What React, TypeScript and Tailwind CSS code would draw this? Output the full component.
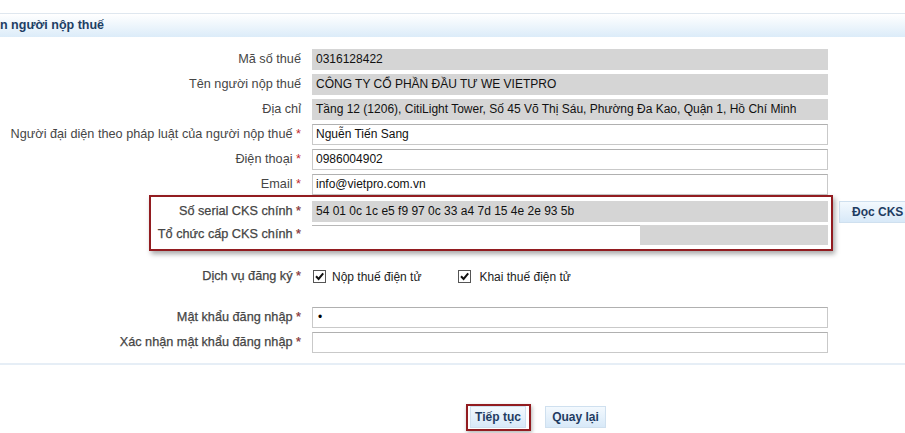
import React from "react";

const Star = () => <span className="text-[#c0282d]"> *</span>;

const Label = ({ text, req, strong }: { text: string; req?: boolean; strong?: boolean }) => (
  <div
    className={
      strong
        ? "w-[302px] shrink-0 whitespace-nowrap pr-[1px] text-right text-[12.7px] text-[#454545] [-webkit-text-stroke:0.25px_#454545]"
        : "w-[302px] shrink-0 whitespace-nowrap pr-[1px] text-right text-[12.7px] text-[#464646]"
    }
  >
    {text}
    {req && <Star />}
  </div>
);

const Field = ({ value, readOnly }: { value?: string; readOnly?: boolean }) => (
  <div
    className={
      readOnly
        ? "ml-[10px] h-[21px] w-[516px] shrink-0 whitespace-nowrap bg-[#d5d5d5] pl-[4px] leading-[21px] text-[#111]"
        : "ml-[10px] h-[21px] w-[516px] shrink-0 whitespace-nowrap border border-[#c9c9c9] border-t-[#b0b0b0] bg-white pl-[3px] leading-[19px] text-[#111]"
    }
  >
    {value}
  </div>
);

const Row = ({
  label,
  req,
  strong,
  value,
  readOnly,
}: {
  label: string;
  req?: boolean;
  strong?: boolean;
  value?: string;
  readOnly?: boolean;
}) => (
  <div className="flex h-[21px] items-center">
    <Label text={label} req={req} strong={strong} />
    <Field value={value} readOnly={readOnly} />
  </div>
);

const Check = () => (
  <span className="flex h-[13px] w-[13px] shrink-0 items-center justify-center border border-[#555] bg-white">
    <svg width="11" height="11" viewBox="0 0 11 11">
      <path d="M2 5.3 L4.6 8 L9.2 2.4" fill="none" stroke="#111" strokeWidth="2" />
    </svg>
  </span>
);

const Btn = ({ children, className }: { children: React.ReactNode; className?: string }) => (
  <button
    className={
      "h-[22px] shrink-0 border border-[#cfe0ef] bg-gradient-to-b from-[#f3f9fe] to-[#d8e9f8] text-[12px] font-bold text-[#1f3c62] " +
      (className ?? "")
    }
  >
    {children}
  </button>
);

export default function App() {
  return (
    <div
      className="relative h-[433px] w-[905px] overflow-hidden bg-white text-[12px]"
      style={{ fontFamily: '"Liberation Sans", Arial, sans-serif' }}
    >
      {/* header */}
      <div className="mt-[13px] h-[24px] border-t border-[#dfe7ef] bg-gradient-to-b from-white to-[#dcecf9] text-[12.5px] font-bold leading-[23px] text-[#1d3e64]">
        n người nộp thuế
      </div>

      {/* form */}
      <div className="flex flex-col gap-[4px] pt-[12px]">
        <Row label="Mã số thuế" value="0316128422" readOnly />
        <Row label="Tên người nộp thuế" value="CÔNG TY CỔ PHẦN ĐẦU TƯ WE VIETPRO" readOnly />
        <Row
          label="Địa chỉ"
          value="Tầng 12 (1206), CitiLight Tower, Số 45 Võ Thị Sáu, Phường Đa Kao, Quận 1, Hồ Chí Minh"
          readOnly
        />
        <Row label="Người đại diện theo pháp luật của người nộp thuế" req value="Nguễn Tiến Sang" />
        <Row label="Điện thoại" req value="0986004902" />
        <Row label="Email" req value="info@vietpro.com.vn" />
      </div>

      {/* CKS rows */}
      <div className="relative mt-[6px] flex flex-col gap-[3px]">
        <div className="flex h-[21px] items-center">
          <Label text="Số serial CKS chính" req strong />
          <Field value="54 01 0c 1c e5 f9 97 0c 33 a4 7d 15 4e 2e 93 5b" readOnly />
          <Btn className="ml-[11px] w-[72px] pl-[12px] text-left">Đọc CKS</Btn>
        </div>
        <div className="flex h-[20px] items-center">
          <Label text="Tổ chức cấp CKS chính" req strong />
          <div className="ml-[10px] flex h-[20px] w-[516px] shrink-0 bg-[#d5d5d5]">
            <div className="h-[20px] w-[328px] border-t border-[#b8b8b8] bg-white" />
          </div>
        </div>
        <div className="pointer-events-none absolute -top-[6px] -bottom-[6px] left-[149px] right-[72px] border-[2px] border-[#921c20] shadow-[2px_3px_5px_rgba(0,0,0,0.35)]" />
      </div>

      {/* services */}
      <div className="mt-[25px] flex h-[13px] items-center">
        <Label text="Dịch vụ đăng ký" req strong />
        <div className="ml-[11px] flex items-center">
          <Check />
          <span className="ml-[6px] text-[#222]">Nộp thuế điện tử</span>
          <span className="ml-[37px]">
            <Check />
          </span>
          <span className="ml-[8px] text-[#222]">Khai thuế điện tử</span>
        </div>
      </div>

      {/* password */}
      <div className="mt-[24px] flex flex-col gap-[4px]">
        <div className="flex h-[21px] items-center">
          <Label text="Mật khẩu đăng nhập" req strong />
          <div className="ml-[10px] h-[21px] w-[516px] shrink-0 border border-[#c9c9c9] border-t-[#b0b0b0] bg-white pl-[5px] text-[12px] leading-[18px] text-black">
            •
          </div>
        </div>
        <Row label="Xác nhận mật khẩu đăng nhập" req strong value="" />
      </div>

      <div className="mt-[10px] h-[2px] bg-[#e6eef6]" />

      {/* buttons */}
      <div className="mt-[41px] flex items-center pl-[470px]">
        <div className="relative">
          <Btn className="w-[56px]">Tiếp tục</Btn>
          <span className="pointer-events-none absolute -top-[2px] -bottom-[3px] -left-[4px] -right-[5px] border-[2px] border-[#921c20] shadow-[1px_2px_4px_rgba(0,0,0,0.3)]" />
        </div>
        <Btn className="ml-[19px] w-[61px]">Quay lại</Btn>
      </div>
    </div>
  );
}
